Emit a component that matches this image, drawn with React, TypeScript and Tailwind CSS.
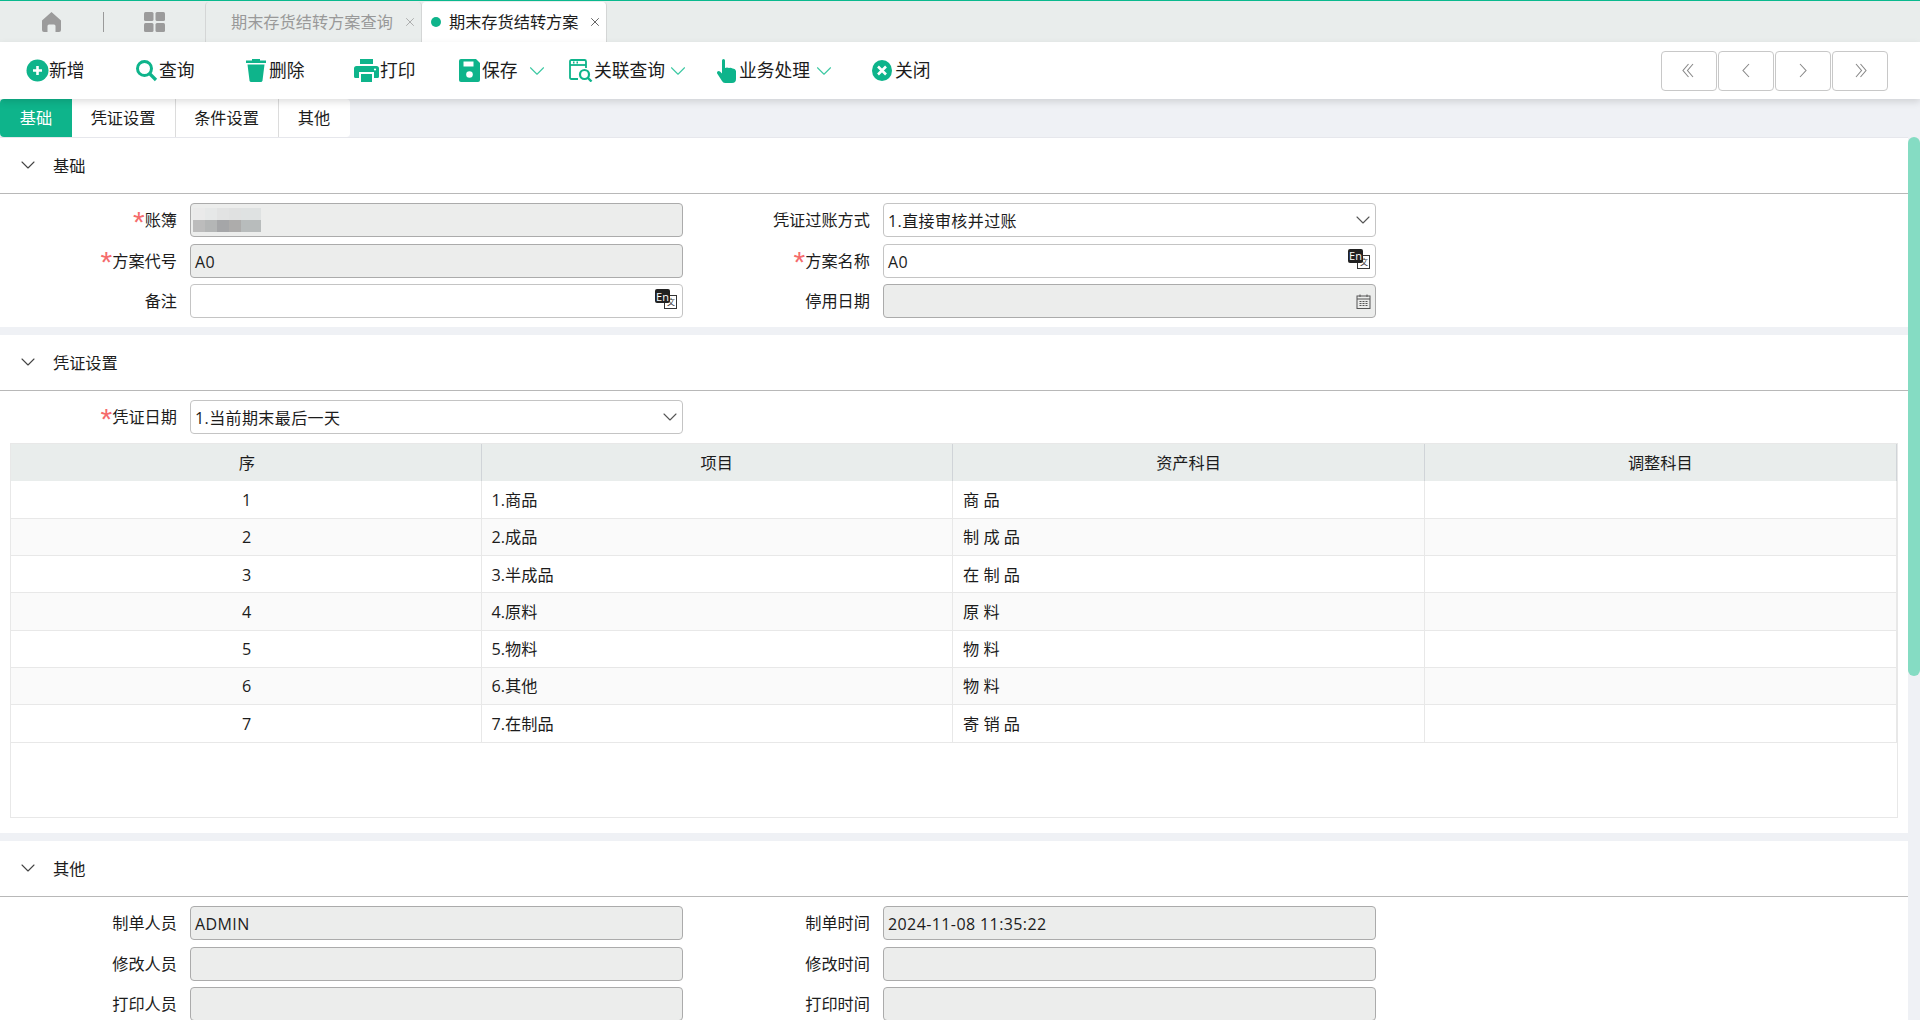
import { ReactNode } from 'react';
import { ChevronDown, X } from 'lucide-react';

const green = '#0eb48b';

function PlusIcon() {
    return (
        <svg width="23" height="23" viewBox="0 0 23 23">
            <circle cx="11.5" cy="11.5" r="11" fill={green} />
            <path d="M11.5 7v9M7 11.5h9" stroke="#fff" strokeWidth="2.6" />
        </svg>
    );
}

function SearchIcon() {
    return (
        <svg width="23" height="23" viewBox="0 0 23 23" fill="none" stroke={green}>
            <circle cx="9.5" cy="9.5" r="7" strokeWidth="3" />
            <path d="M14.5 14.5l6.5 6.5" strokeWidth="3.2" />
        </svg>
    );
}

function TrashIcon() {
    return (
        <svg width="20" height="23" viewBox="0 0 20 23" fill={green}>
            <path d="M6 0h8v1.5h6V4H0V1.5h6z" />
            <path d="M1.5 5.5h17L16.5 21.5q-.2 1.5-1.8 1.5H5.3q-1.6 0-1.8-1.5z" />
        </svg>
    );
}

function PrintIcon() {
    return (
        <svg width="25" height="23" viewBox="0 0 25 23" fill={green}>
            <path d="M6 0h13v5H6z" />
            <path d="M2.5 7h20Q25 7 25 9.5v8q0 1.5-1.5 1.5H20v-6H5v6H1.500Q0 19 0 17.500v-8Q0 7 2.500 7z" />
            <path d="M7 15h11v8H7z" />
            <circle cx="21" cy="10.500" r="1.100" fill="#fff" />
        </svg>
    );
}

function SaveIcon() {
    return (
        <svg width="21" height="23" viewBox="0 0 21 23">
            <path d="M2 0h15l4 4v17q0 2-2 2H2q-2 0-2-2V2q0-2 2-2z" fill={green} />
            <path d="M4.500 2.500h10v5h-10z" fill="#fff" />
            <circle cx="10.500" cy="15.500" r="3.300" fill="#fff" />
        </svg>
    );
}

function LinkSearchIcon() {
    return (
        <svg width="25" height="23" viewBox="0 0 25 23" fill="none" stroke={green} strokeWidth="1.800">
            <path d="M9 20H2.500Q1 20 1 18.500V2.500Q1 1 2.500 1h13Q17 1 17 2.500V9" />
            <path d="M1 6h16" />
            <path d="M4 3.500h1.500M7.500 3.500H9" />
            <circle cx="15.500" cy="15.500" r="4.500" strokeWidth="2.200" />
            <path d="M19 19l3.500 3.500" strokeWidth="2.400" />
        </svg>
    );
}

function HandIcon() {
    return (
        <svg width="19" height="24" viewBox="0 0 19 24" fill={green}>
            <path d="M5 1.500q0-1.500 1.500-1.500T8 1.500V9q2-.8 4 0 2-.5 3.500.5 3-.2 3.500 2.500v8q0 4-4 4H8q-2 0-3-2L.5 15q-1-1.500 0-2.500t2.500 0L5 14.500z" />
        </svg>
    );
}

function CloseIcon() {
    return (
        <svg width="20" height="21" viewBox="0 0 20 21">
            <ellipse cx="10" cy="10.500" rx="10" ry="10.500" fill={green} />
            <path d="M6 6.500l8 8M14 6.500l-8 8" stroke="#fff" strokeWidth="2.600" />
        </svg>
    );
}

function HomeIcon() {
    return (
        <svg width="19" height="20" viewBox="0 0 19 20" fill="#9b9b9b">
            <path d="M9.500 0L19 8.500V18q0 2-2 2h-3.500v-6q0-1.500-1.500-1.500H7q-1.500 0-1.500 1.500v6H2q-2 0-2-2V8.500z" />
        </svg>
    );
}

function GridIcon() {
    return (
        <svg width="21" height="20" viewBox="0 0 21 20" fill="#9b9b9b">
            <rect width="9.500" height="9" rx="1.500" />
            <rect x="11.500" width="9.500" height="9" rx="1.500" />
            <rect y="11" width="9.500" height="9" rx="1.500" />
            <rect x="11.500" y="11" width="9.500" height="9" rx="1.500" />
        </svg>
    );
}

function CalendarIcon() {
    return (
        <svg width="15" height="15" viewBox="0 0 15 15" fill="none" stroke="#555">
            <rect x="1" y="2" width="13" height="12.500" />
            <path d="M1 5h13M4 0.500V3M11 0.500V3" />
            <path d="M3.500 7.500h2M6.500 7.500h2M9.500 7.500h2M3.500 9.500h2M6.500 9.500h2M9.500 9.500h2M3.500 11.500h2M6.500 11.500h2M9.500 11.500h2" strokeWidth="1" />
        </svg>
    );
}

function TranslateIcon() {
    return (
        <div className="relative mt-[4px] mr-[5px] h-[20px] w-[22px] shrink-0 self-start">
            <div className="absolute right-0 bottom-0 flex h-[14px] w-[13px] items-center justify-end border border-[#333] bg-white pr-px text-[8px] leading-none tracking-normal text-[#333]">文</div>
            <div className="absolute top-0 left-0 flex h-[14px] w-[15px] items-center justify-center rounded-[2px] bg-[#222] text-[11px] leading-none tracking-normal text-white">En</div>
        </div>
    );
}

// nav arrows are thinner and taller than the lucide chevrons
function NavArrow({ path }: { path: string }) {
    return (
        <svg width="14" height="15" viewBox="0 0 14 15" fill="none" stroke="#888" strokeWidth="1.100">
            <path d={path} />
        </svg>
    );
}

const navArrows = [
    'M6.500 1L1 7.500 6.500 14M11 1L5.500 7.500 11 14',
    'M10 1L4 7.500 10 14',
    'M4 1L10 7.500 4 14',
    'M3 1L8.500 7.500 3 14M7.500 1L13 7.500 7.500 14',
];

const tools = [
    { label: '新增', icon: <PlusIcon />, width: 'w-[110px]', gap: 'gap-0' },
    { label: '查询', icon: <SearchIcon />, width: 'w-[110px] -ml-px', gap: 'gap-px' },
    { label: '删除', icon: <TrashIcon />, width: 'w-[108px] ml-px', gap: 'gap-[3px]' },
    { label: '打印', icon: <PrintIcon />, width: 'w-[105px]', gap: 'gap-px' },
    { label: '保存', icon: <SaveIcon />, width: 'w-[110px]', gap: 'gap-[2px]', menu: 'ml-[4px]' },
    { label: '关联查询', icon: <LinkSearchIcon />, width: 'w-[148px]', gap: 'gap-0', menu: 'ml-0' },
    { label: '业务处理', icon: <HandIcon />, width: 'w-[155px]', gap: 'gap-[3px]', menu: '-ml-[2px]' },
    { label: '关闭', icon: <CloseIcon />, width: 'w-[80px]', gap: 'gap-[3px]' },
];

const rows = [
    ['1', '1.商品', '商 品'],
    ['2', '2.成品', '制 成 品'],
    ['3', '3.半成品', '在 制 品'],
    ['4', '4.原料', '原 料'],
    ['5', '5.物料', '物 料'],
    ['6', '6.其他', '物 料'],
    ['7', '7.在制品', '寄 销 品'],
];

function Section({ title, children }: { title: string; children: ReactNode }) {
    return (
        <section className="bg-white">
            <div className="flex h-[56px] items-center border-b border-[#b8b8b8] pt-px pl-[16px]">
                <ChevronDown className="mb-[3px] text-[#444]" size={24} strokeWidth={1.100} />
                <span className="ml-[13px] text-[16.2px]">{title}</span>
            </div>
            {children}
        </section>
    );
}

function Field({ label, required }: { label: string; required?: boolean }) {
    return (
        <div className="flex items-center justify-end pt-px text-[16.2px]">
            {required && <span className="relative -top-[2px] h-[14px] font-['Liberation_Sans'] text-[30px] leading-[20px] text-[#f56c6c]">*</span>}
            {label}
        </div>
    );
}

function Box({ value, readOnly, children }: { value?: string; readOnly?: boolean; children?: ReactNode }) {
    return (
        <div className={`flex h-[34px] items-center justify-between rounded-[4px] border pl-1 text-[16px] tracking-[0.4px] ${readOnly ? 'border-[#ababab] bg-[#ecedec]' : 'border-[#c4c4c4] bg-white'}`}>
            {value && <span className="pt-[2px]">{value}</span>}
            {children}
        </div>
    );
}

function SelectArrow() {
    return <ChevronDown className="text-[#555]" size={24} strokeWidth={1.100} />;
}

function Blurred() {
    return (
        <div className="mr-auto ml-[-2px] grid h-[24px] grid-cols-[12px_12px_12px_12px_20px] grid-rows-2">
            <div className="bg-[#eaeaea]" />
            <div className="bg-[#e6e8e8]" />
            <div className="bg-[#e2e3e3]" />
            <div className="bg-[#e0e1e1]" />
            <div className="bg-[#dfe2e2]" />
            <div className="bg-[#bcbcbc]" />
            <div className="bg-[#b4b6b6]" />
            <div className="bg-[#a5a6a8]" />
            <div className="bg-[#adacab]" />
            <div className="bg-[#b8bcbc]" />
        </div>
    );
}

const formGrid = 'grid grid-cols-[177px_493px_174px_493px] gap-x-[13px] gap-y-[6.5px]';

export default function App() {
    return (
        <div className="flex h-screen w-screen flex-col overflow-hidden bg-[#eff1f5] font-['Open_Sans','Noto_Sans_CJK_SC',sans-serif] text-[#1c1c1c]">
            {/* tab strip */}
            <div className="flex h-[42px] shrink-0 items-end border-t border-[#0ab98e] bg-[#e9edec]">
                <div className="flex h-full w-[205px] items-center pl-[42px]">
                    <HomeIcon />
                    <div className="mr-[40px] ml-[42px] h-5 w-px bg-[#9a9a9a]" />
                    <GridIcon />
                </div>
                <div className="flex h-[40px] w-[217px] items-center rounded-t-[4px] border-x border-[#d4d6d6] pl-[25px] text-[16.2px] text-[#999]">
                    期末存货结转方案查询
                    <X className="ml-[10px] text-[#999]" size={14} strokeWidth={1.300} />
                </div>
                <div className="flex h-[40px] w-[185px] items-center rounded-t-[4px] border-r border-[#d4d6d6] bg-white pl-[9px] text-[16.2px]">
                    <span className="mr-2 size-[10px] rounded-full bg-[#0eb48b]" />
                    期末存货结转方案
                    <X className="ml-[9px] text-[#333]" size={14} strokeWidth={1.300} />
                </div>
            </div>

            {/* toolbar */}
            <div className="relative z-10 flex h-[57px] shrink-0 items-center bg-white pl-[26px] shadow-[0_3px_7px_rgba(0,0,0,0.13)]">
                {tools.map(t => (
                    <div key={t.label} className={`flex items-center text-[17.8px] ${t.width} ${t.gap}`}>
                        {t.icon}
                        <span>{t.label}</span>
                        {t.menu && <ChevronDown className={`text-[#3cc8a2] ${t.menu}`} size={26} strokeWidth={1} />}
                    </div>
                ))}
                <div className="mr-[32px] ml-auto flex gap-px">
                    {navArrows.map(p => (
                        <button key={p} className="flex h-10 w-14 items-center justify-center rounded-[4px] border border-[#c8c8c8] bg-white">
                            <NavArrow path={p} />
                        </button>
                    ))}
                </div>
            </div>

            {/* form tabs */}
            <div className="flex h-[38px] shrink-0">
                <div className="flex overflow-hidden rounded-[4px] bg-white text-[16.2px]">
                    <div className="flex w-[72px] items-center justify-center bg-[#0eb48b] text-white">基础</div>
                    <div className="flex w-[104px] items-center justify-center border-r border-[#dcdcdc] pr-px">凭证设置</div>
                    <div className="flex w-[103px] items-center justify-center border-r border-[#dcdcdc] pr-px">条件设置</div>
                    <div className="flex w-[71px] items-center justify-center pr-px">其他</div>
                </div>
            </div>

            <div className="flex min-h-0 flex-1">
                <div className="flex-1 overflow-hidden border-t border-[#e6e7ec]">
                    <Section title="基础">
                        <div className={`${formGrid} pt-[9px] pb-[9px]`}>
                            <Field label="账簿" required />
                            <Box readOnly><Blurred /></Box>
                            <Field label="凭证过账方式" />
                            <Box value="1.直接审核并过账"><SelectArrow /></Box>
                            <Field label="方案代号" required />
                            <Box value="A0" readOnly />
                            <Field label="方案名称" required />
                            <Box value="A0"><TranslateIcon /></Box>
                            <Field label="备注" />
                            <Box><span /><TranslateIcon /></Box>
                            <Field label="停用日期" />
                            <Box readOnly><span /><div className="mr-[4px]"><CalendarIcon /></div></Box>
                        </div>
                    </Section>

                    <div className="h-2" />

                    <Section title="凭证设置">
                        <div className={`${formGrid} pt-[9px]`}>
                            <Field label="凭证日期" required />
                            <Box value="1.当前期末最后一天"><SelectArrow /></Box>
                        </div>
                        <div className="mx-[10px] mt-[9px] h-[375px] border border-[#e8e8e8]">
                            <table className="w-[1885px] table-fixed border-collapse text-[16.2px]">
                                <colgroup>
                                    <col className="w-[470px]" />
                                    <col className="w-[471.5px]" />
                                    <col className="w-[472px]" />
                                    <col className="w-[471.5px]" />
                                </colgroup>
                                <thead>
                                    <tr className="h-[37px] bg-[#e9edec]">
                                        {['序', '项目', '资产科目', '调整科目'].map((h, i) => (
                                            <th key={h} className={`border-r border-[#d0d4d8] pt-px font-normal ${i === 0 ? 'pl-[2px]' : ''}`}>{h}</th>
                                        ))}
                                    </tr>
                                </thead>
                                <tbody>
                                    {rows.map((r, i) => (
                                        <tr key={r[0]} className={`h-[37.3px] border-b border-[#e8e8e8] ${i % 2 ? 'bg-[#fafafa]' : 'bg-white'}`}>
                                            <td className="border-r border-[#e8e8e8] pt-px pl-[2px] text-center">{r[0]}</td>
                                            <td className="border-r border-[#e8e8e8] pt-px pl-[10px]">{r[1]}</td>
                                            <td className="border-r border-[#e8e8e8] pt-px pl-[10px]">{r[2]}</td>
                                            <td className="border-r border-[#e8e8e8]" />
                                        </tr>
                                    ))}
                                </tbody>
                            </table>
                        </div>
                        <div className="h-[15px]" />
                    </Section>

                    <div className="h-2" />

                    <Section title="其他">
                        <div className={`${formGrid} pt-[9px]`}>
                            <Field label="制单人员" />
                            <Box value="ADMIN" readOnly />
                            <Field label="制单时间" />
                            <Box value="2024-11-08 11:35:22" readOnly />
                            <Field label="修改人员" />
                            <Box readOnly />
                            <Field label="修改时间" />
                            <Box readOnly />
                            <Field label="打印人员" />
                            <Box readOnly />
                            <Field label="打印时间" />
                            <Box readOnly />
                        </div>
                    </Section>
                </div>

                {/* scrollbar */}
                <div className="w-3 shrink-0 bg-[#eff1f5]">
                    <div className="h-[539px] rounded-[6px] bg-[#85dcc3]" />
                </div>
            </div>
        </div>
    );
}
